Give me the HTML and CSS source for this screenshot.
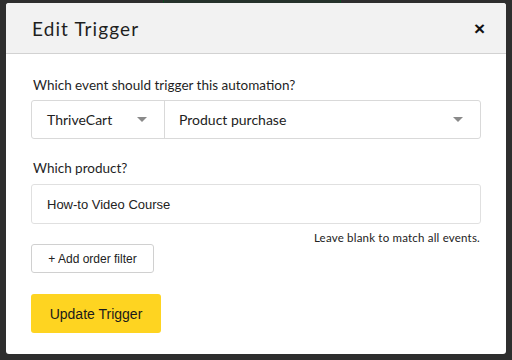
FILE: index.html
```html
<!DOCTYPE html>
<html lang="en">
<head>
  <meta charset="UTF-8">
  <title>Edit Trigger</title>
  <link rel="stylesheet" href="styles.css">
</head>
<body>
  <div class="backdrop-top">
    <div class="backdrop-card"></div>
  </div>

  <div class="modal">
    <div class="modal-header">
      <h2 class="modal-title">Edit Trigger</h2>
      <span class="close-btn">&times;</span>
    </div>

    <div class="modal-body">
      <div class="field-label">Which event should trigger this automation?</div>
      <div class="select-group">
        <div class="select select-app">
          <span>ThriveCart</span>
          <span class="caret"></span>
        </div>
        <div class="select select-event">
          <span>Product purchase</span>
          <span class="caret"></span>
        </div>
      </div>

      <div class="field-label product-label">Which product?</div>
      <div class="text-input">How-to Video Course</div>
      <div class="hint">Leave blank to match all events.</div>

      <button class="filter-btn">+ Add order filter</button>
      <div>
        <button class="update-btn">Update Trigger</button>
      </div>
    </div>
  </div>
</body>
</html>
```

FILE: styles.css
```css
    body {
      margin: 0;
      background-color: #2e2e2e;
      font-family: Lato, "Noto Sans", sans-serif;
      color: #222;
      height: 360px;
      overflow: hidden;
    }
    .backdrop-top {
      height: 3px;
      display: flex;
    }
    .backdrop-card {
      margin-left: 163px;
      width: 176px;
      background-color: #26322b;
      border-left: 1px solid #0d4a22;
      border-right: 1px solid #0d4a22;
    }
    .modal {
      margin: 0 6px;
      height: 351px;
      background-color: #fff;
      border-radius: 3px;
      overflow: hidden;
    }
    .modal-header {
      height: 50px;
      background-color: #f2f2f2;
      border-bottom: 1px solid #d2d2d2;
      display: flex;
      align-items: center;
      justify-content: space-between;
      padding: 0 21px 0 26px;
    }
    .modal-title {
      margin: 0;
      font-size: 19px;
      font-weight: normal;
      letter-spacing: 1.1px;
      color: #1f1f1f;
    }
    .close-btn {
      font-family: "Liberation Sans", Arial, sans-serif;
      font-size: 19px;
      font-weight: bold;
      line-height: 1;
      color: #111;
    }
    .modal-body {
      padding: 23px 25px 0 25px;
    }
    .field-label {
      font-size: 13.5px;
      line-height: 16px;
      padding-left: 2px;
      margin-bottom: 7px;
      color: #1f1f1f;
    }
    .product-label {
      margin-top: 21px;
      margin-bottom: 8px;
    }
    .select-group {
      display: flex;
      height: 37px;
      border: 1px solid #d9d9d9;
      border-radius: 3px;
    }
    .select {
      display: flex;
      align-items: center;
      justify-content: space-between;
      font-size: 14px;
      color: #222;
    }
    .select-app {
      width: 133px;
      padding: 0 17px 0 15px;
      box-sizing: border-box;
      border-right: 1px solid #d9d9d9;
    }
    .select-event {
      flex: 1;
      padding: 0 17px 0 14px;
    }
    .caret {
      width: 0;
      height: 0;
      border-left: 5px solid transparent;
      border-right: 5px solid transparent;
      border-top: 5px solid #8a8a8a;
    }
    .text-input {
      height: 38px;
      border: 1px solid #e0e0e0;
      border-radius: 3px;
      padding-left: 15px;
      display: flex;
      align-items: center;
      font-family: "Liberation Sans", Arial, sans-serif;
      font-size: 13px;
      color: #222;
    }
    .hint {
      text-align: right;
      font-size: 11.5px;
      letter-spacing: 0.2px;
      line-height: 13px;
      margin-top: 7px;
      padding-right: 1px;
      color: #222;
    }
    .filter-btn {
      display: block;
      width: 123px;
      height: 29px;
      background-color: #fff;
      border: 1px solid #d0d0d0;
      border-radius: 3px;
      font-family: "Liberation Sans", Arial, sans-serif;
      font-size: 12px;
      color: #222;
      padding: 0;
    }
    .update-btn {
      margin-top: 21px;
      width: 130px;
      height: 39px;
      background-color: #fed421;
      border: none;
      border-radius: 3px;
      font-family: "Liberation Sans", Arial, sans-serif;
      font-size: 14px;
      color: #1a1a1a;
      padding: 0;
    }
```
